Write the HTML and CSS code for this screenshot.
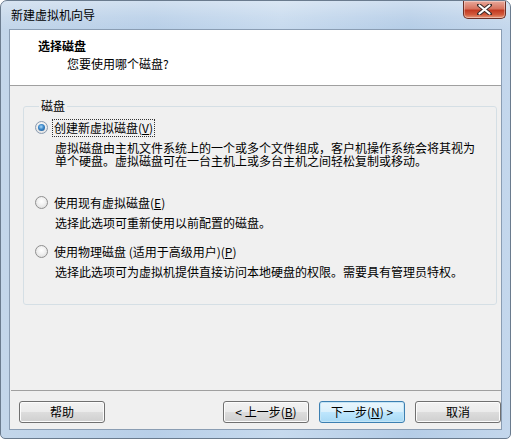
FILE: index.html
```html
<!DOCTYPE html>
<html lang="zh-CN">
<head>
<meta charset="utf-8">
<title>新建虚拟机向导</title>
<link rel="stylesheet" href="styles.css">
</head>
<body>
<div class="window">
  <div class="titlebar">
    <span class="title">新建虚拟机向导</span>
    <div class="close">
      <svg width="15" height="11" viewBox="0 0 15 11">
        <path d="M2 1 L13 10 M13 1 L2 10" stroke="#3a2a28" stroke-width="4" stroke-linecap="round"/>
        <path d="M2.5 1.5 L12.5 9.5 M12.5 1.5 L2.5 9.5" stroke="#ffffff" stroke-width="2.2" stroke-linecap="round"/>
      </svg>
    </div>
  </div>
  <div class="client">
    <div class="header">
      <div class="h-title">选择磁盘</div>
      <div class="h-sub">您要使用哪个磁盘?</div>
    </div>
    <div class="body">
      <fieldset class="group">
        <legend>磁盘</legend>
        <div class="opt">
          <span class="radio checked"></span>
          <span class="label focus">创建新虚拟磁盘(<u>V</u>)</span>
        </div>
        <div class="desc first">虚拟磁盘由主机文件系统上的一个或多个文件组成，客户机操作系统会将其视为<br>单个硬盘。虚拟磁盘可在一台主机上或多台主机之间轻松复制或移动。</div>
        <div class="opt">
          <span class="radio"></span>
          <span class="label">使用现有虚拟磁盘(<u>E</u>)</span>
        </div>
        <div class="desc">选择此选项可重新使用以前配置的磁盘。</div>
        <div class="opt">
          <span class="radio"></span>
          <span class="label">使用物理磁盘 (适用于高级用户)(<u>P</u>)</span>
        </div>
        <div class="desc">选择此选项可为虚拟机提供直接访问本地硬盘的权限。需要具有管理员特权。</div>
      </fieldset>
    </div>
    <div class="footer">
      <button class="btn">帮助</button>
      <div class="spacer"></div>
      <button class="btn">&lt; 上一步(<u>B</u>)</button>
      <button class="btn default">下一步(<u>N</u>) &gt;</button>
      <button class="btn">取消</button>
    </div>
  </div>
</div>
</body>
</html>
```

FILE: styles.css
```css
html, body {
  margin: 0;
  padding: 0;
  background: #ffffff;
}
body {
  font-family: "Noto Sans CJK SC", "Noto Sans", sans-serif;
  font-size: 12px;
  line-height: 14px;
  color: #000;
}
.window {
  width: 511px;
  height: 439px;
  box-sizing: border-box;
  border: 1px solid #6a7b8e;
  border-radius: 7px 7px 5px 5px;
  background: linear-gradient(90deg, #c3d6ea 0%, #b8cfe8 30%, #c7daee 55%, #b5cde7 80%, #c4d7ec 100%);
  display: flex;
  flex-direction: column;
  overflow: hidden;
}
.titlebar {
  height: 28px;
  flex: none;
  display: flex;
  justify-content: space-between;
  align-items: flex-start;
  padding-left: 10px;
  padding-right: 4px;
  background: linear-gradient(180deg, rgba(255,255,255,0.35) 0%, rgba(255,255,255,0.1) 60%, rgba(255,255,255,0) 100%);
}
.title {
  margin-top: 7px;
  color: #000;
  font-size: 12px;
  line-height: 14px;
}
.close {
  width: 41px;
  height: 17px;
  border: 1px solid #6b2f26;
  border-top: none;
  border-radius: 0 0 5px 5px;
  background: linear-gradient(180deg, #e9a99b 0%, #d7735f 45%, #c23a22 55%, #d25a3c 80%, #e79a7c 100%);
  display: flex;
  align-items: center;
  justify-content: center;
  box-shadow: inset 0 0 0 1px rgba(255,255,255,0.35);
}
.client {
  margin: 0 8px 8px 8px;
  border: 1px solid #8a9db3;
  background: #f0f0f0;
  flex: 1;
  display: flex;
  flex-direction: column;
}
.header {
  background: #ffffff;
  height: 56px;
  flex: none;
  border-bottom: 1px solid #a0a0a0;
  box-sizing: border-box;
  padding-top: 9px;
}
.h-title {
  font-weight: bold;
  padding-left: 28px;
}
.h-sub {
  padding-left: 57px;
  margin-top: 4px;
}
.body {
  flex: 1;
  padding: 13px 4px 0 13px;
}
.group {
  margin: 0;
  border: 1px solid #d5dfe5;
  border-radius: 3px;
  padding: 6px 0 0 11px;
  height: 206px;
  box-sizing: border-box;
}
.group legend {
  padding: 0 2px;
  margin-left: 4px;
  line-height: 14px;
}
.opt {
  display: flex;
  align-items: center;
  height: 17px;
}
.radio {
  width: 11px;
  height: 11px;
  border-radius: 50%;
  border: 1px solid #8f8f8f;
  background: radial-gradient(circle at 50% 40%, #ffffff 0%, #f2f2f2 40%, #d8d8d8 100%);
  box-sizing: content-box;
  flex: none;
  position: relative;
}
.radio.checked {
  border-color: #8a9bb0;
}
.radio.checked::after {
  content: "";
  position: absolute;
  left: 2px;
  top: 2px;
  width: 7px;
  height: 7px;
  border-radius: 50%;
  background: radial-gradient(circle at 45% 40%, #a9d8f8 0%, #3a86c8 45%, #1b4f86 100%);
}
.label {
  margin-left: 4px;
  padding: 1px 1px;
  border: 1px solid transparent;
}
.label.focus {
  border: 1px dotted #333;
}
.desc {
  padding-left: 20px;
  line-height: 13px;
  margin-top: 5px;
  margin-bottom: 14px;
}
.desc.first {
  margin-bottom: 27px;
}
.footer {
  height: 39px;
  box-sizing: border-box;
  flex: none;
  border-top: 1px solid #a0a0a0;
  display: flex;
  align-items: flex-start;
  padding: 10px 0 0 8px;
  gap: 10px;
  margin: 0 0 0 1px;
}
.spacer {
  flex: 1;
}
.btn {
  width: 86px;
  height: 22px;
  margin: 0;
  font-family: inherit;
  font-size: 12px;
  line-height: 14px;
  color: #000;
  border: 1px solid #707070;
  border-radius: 3px;
  background: linear-gradient(180deg, #f2f2f2 0%, #ebebeb 50%, #dddddd 51%, #cfcfcf 100%);
  box-shadow: inset 0 0 0 1px #fcfcfc;
  padding: 0;
}
.btn.default {
  border-color: #3c7fb1;
  background: linear-gradient(180deg, #eaf6fd 0%, #d9f0fc 50%, #bee6fd 51%, #a7d9f5 100%);
  box-shadow: inset 0 0 0 1px #c4e5f6;
}
```
